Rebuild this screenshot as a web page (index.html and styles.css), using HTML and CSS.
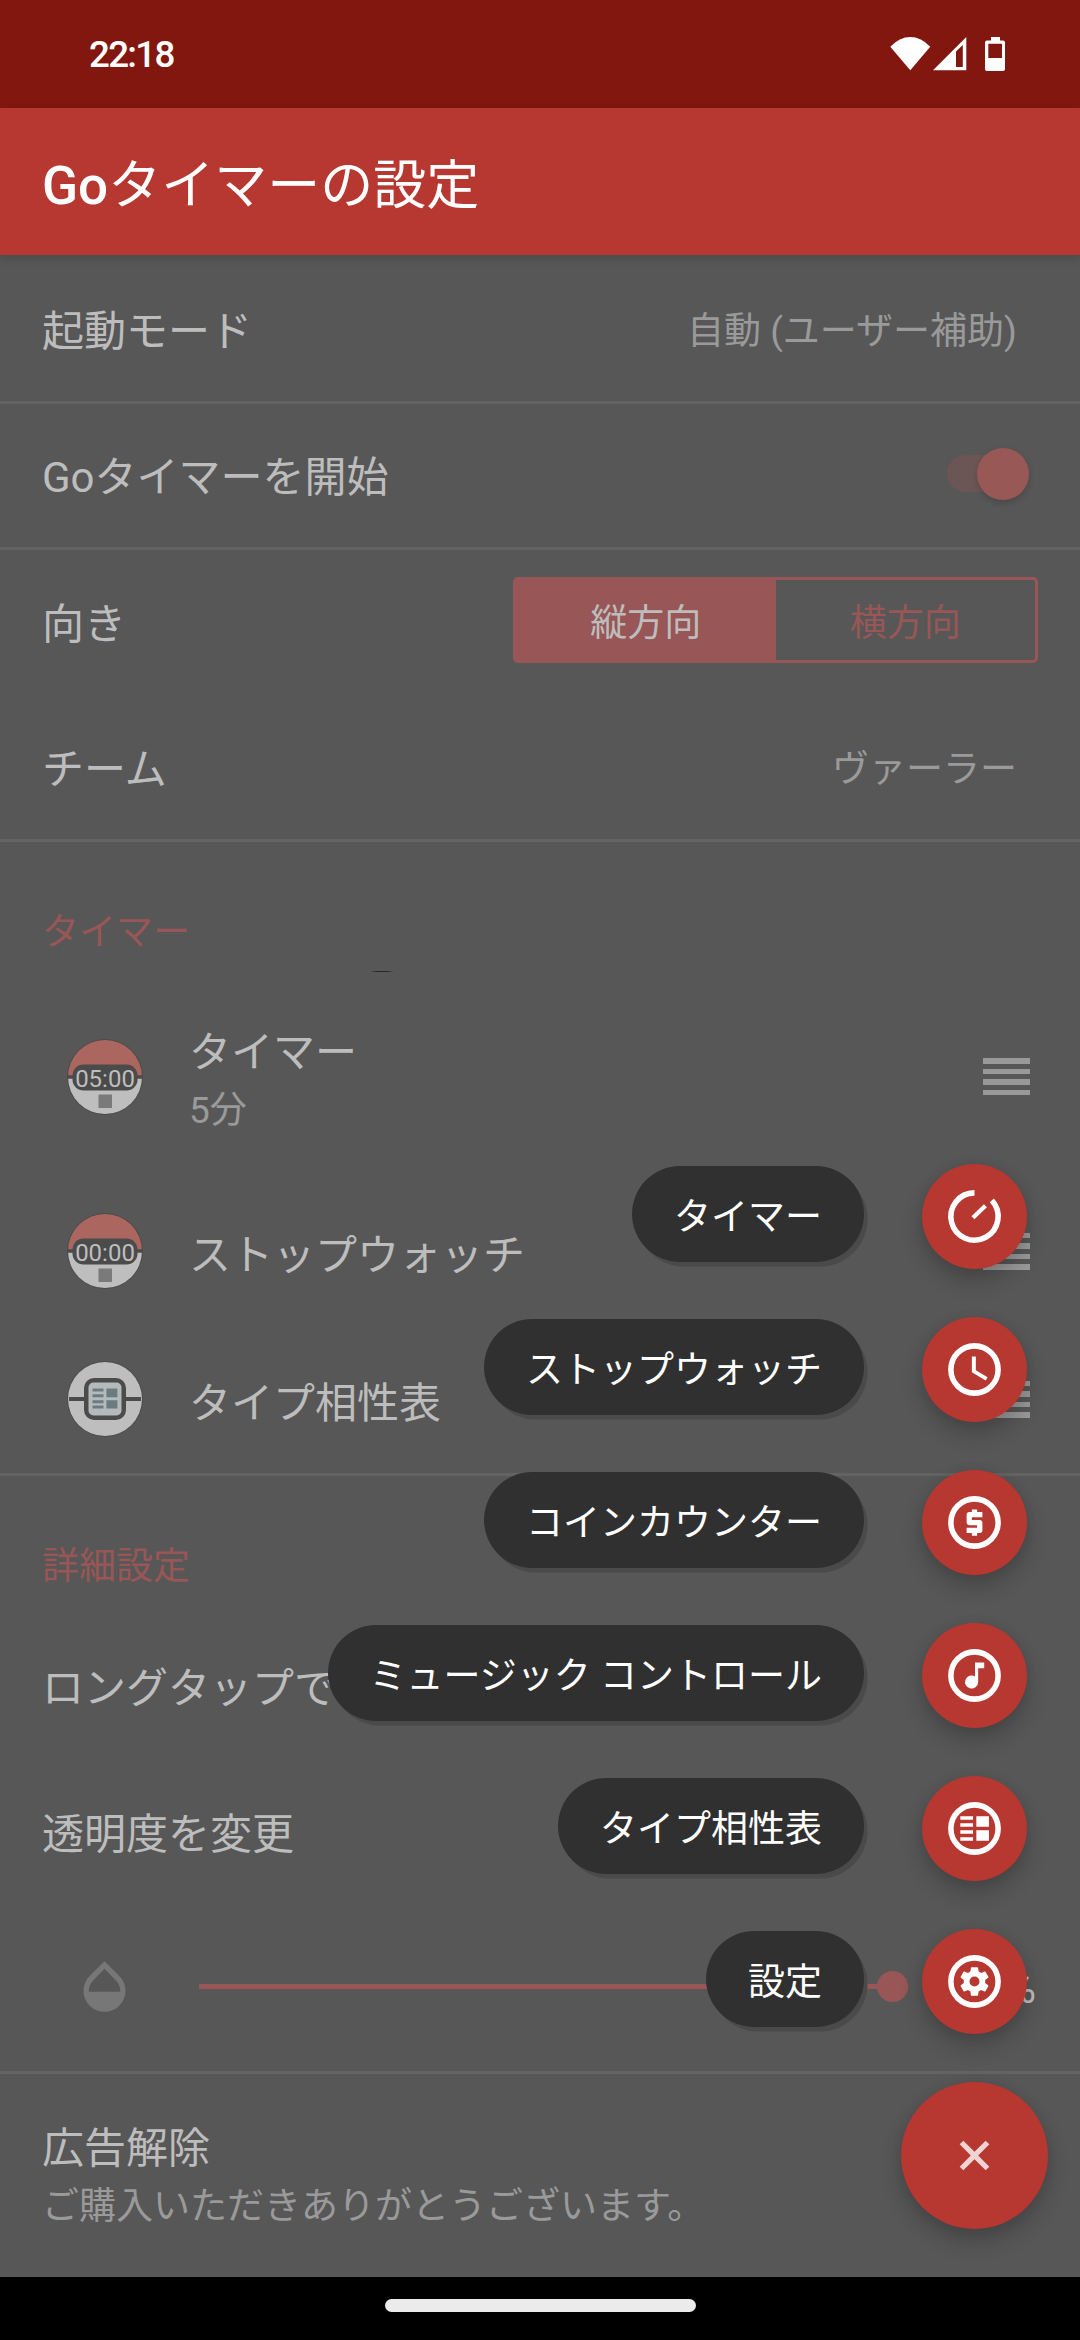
FILE: index.html
```html
<!DOCTYPE html>
<html lang="ja">
<head>
<meta charset="utf-8">
<title>Goタイマーの設定</title>
<link rel="stylesheet" href="styles.css">
</head>
<body>
<div class="screen">
  <header class="status-bar">
    <span class="clock">22:18</span>
    <svg class="status-icons" width="116" height="36" viewBox="890 36 116 36">
      <path class="white" d="M890.3 46.7Q899.500 37 910.300 37T930.200 46.700L910.300 70.300Z"/>
      <path class="white" fill-rule="evenodd" d="M933 70.300L966.300 37V70.300ZM956 51.500V67H962.800V45Z"/>
      <path class="white" fill-rule="evenodd" d="M991 37h9v3.500h3a2 2 0 0 1 2 2V69a2 2 0 0 1-2 2H987a2 2 0 0 1-2-2V42.500a2 2 0 0 1 2-2h4ZM988.300 43.800V58H1002V43.800Z"/>
    </svg>
  </header>
  <div class="app-bar"><h1 class="app-title"><span class="latin">Go</span>タイマーの設定</h1></div>

  <main class="settings">
    <div class="row first divided"><span>起動モード</span><span class="value">自動 (ユーザー補助)</span></div>
    <div class="row divided"><span>Goタイマーを開始</span><span class="switch"><span class="thumb"></span></span></div>
    <div class="row orientation"><span>向き</span>
      <div class="segmented"><span class="segment selected">縦方向</span><span class="segment">横方向</span></div>
    </div>
    <div class="row divided"><span>チーム</span><span class="value">ヴァーラー</span></div>

    <section class="timers">
      <h2 class="section-title">タイマー</h2>
      <span class="clipped-edge"></span>
      <div class="item item-timer">
        <svg class="ball" width="76" height="76" viewBox="-38 -38 76 76">
          <circle class="ball-rim" r="38"/><path class="ball-top" d="M-37 0a37 37 0 0 1 74 0Z"/><path class="ball-light" d="M-37 0a37 37 0 0 0 74 0Z"/>
          <path class="ball-dark" d="M-37-1.800H37V1.800H-37Z"/><rect class="ball-dark" x="-32.500" y="-12.500" width="65" height="26" rx="11"/>
          <rect class="ball-button" x="-6.500" y="17.500" width="13.500" height="13.500"/>
          <text class="ball-text" x="0" y="9.500" text-anchor="middle">05:00</text>
        </svg>
        <div class="item-text"><span>タイマー</span><span class="sub">5分</span></div>
        <span class="handle"><i></i><i></i><i></i><i></i></span>
      </div>
      <div class="item item-stopwatch">
        <svg class="ball" width="76" height="76" viewBox="-38 -38 76 76">
          <circle class="ball-rim" r="38"/><path class="ball-top" d="M-37 0a37 37 0 0 1 74 0Z"/><path class="ball-light" d="M-37 0a37 37 0 0 0 74 0Z"/>
          <path class="ball-dark" d="M-37-1.800H37V1.800H-37Z"/><rect class="ball-dark" x="-32.500" y="-12.500" width="65" height="26" rx="11"/>
          <rect class="ball-button" x="-6.500" y="17.500" width="13.500" height="13.500"/>
          <text class="ball-text" x="0" y="9.500" text-anchor="middle">00:00</text>
        </svg>
        <div class="item-text"><span>ストップウォッチ</span></div>
        <span class="handle"><i></i><i></i><i></i><i></i></span>
      </div>
      <div class="item item-chart">
        <svg class="ball" width="76" height="76" viewBox="-38 -38 76 76">
          <circle class="ball-rim" r="38"/><circle class="ball-light" r="37"/>
          <path class="ball-dark" d="M-36-2H36V2H-36Z"/><rect class="ball-dark" x="-21" y="-21" width="42" height="42" rx="10"/>
          <rect class="ball-panel" x="-16.500" y="-16.500" width="33" height="33" rx="5"/>
          <path class="ball-glyph" d="M-12.500-10.500H-1.500v3H-12.500ZM-12.500-4.700H-1.500v3H-12.500ZM-12.500 1.200H-1.500v3H-12.500ZM-12.500 6.500H-1.500v3H-12.500ZM1.400-10.500h11v8.800h-11ZM1.400 1.200h11V9.500h-11Z"/>
        </svg>
        <div class="item-text"><span>タイプ相性表</span></div>
        <span class="handle"><i></i><i></i><i></i><i></i></span>
      </div>
    </section>

    <section class="advanced">
      <h2 class="section-title">詳細設定</h2>
      <div class="plain-row">ロングタップで</div>
      <div class="plain-row">透明度を変更</div>
      <div class="slider-row">
        <svg class="drop" width="63" height="63" viewBox="0 0 24 24"><path d="M17.660 8L12 2.350 6.340 8C4.780 9.560 4 11.640 4 13.640s.780 4.110 2.340 5.670 3.610 2.350 5.660 2.350 4.100-.790 5.660-2.350S20 15.640 20 13.640 19.220 9.560 17.660 8zM6 14c.010-2 .620-3.270 1.760-4.400L12 5.270l4.240 4.380C17.380 10.770 17.990 12 18 14H6z"/></svg>
        <span class="slider"><span class="slider-thumb"></span></span>
        <span class="percent">100%</span>
      </div>
    </section>

    <section class="ads"><span>広告解除</span><span class="sub">ご購入いただきありがとうございます。</span></section>
  </main>

  <nav class="nav-bar"><span class="home-handle"></span></nav>

  <div class="speed-dial">
    <div class="action"><span class="pill">タイマー</span><span class="fab"><svg viewBox="0 0 24 24"><path class="line" d="M12 3A9 9 0 1 0 18.600 5.880"/><path class="hand" d="M11.400 12.500L16.150 7.900"/></svg></span></div>
    <div class="action"><span class="pill">ストップウォッチ</span><span class="fab"><svg viewBox="0 0 24 24"><circle class="line" cx="12" cy="12" r="9"/><path class="white" d="M12.500 7H11v6l5.250 3.150.750-1.230-4.500-2.670z"/></svg></span></div>
    <div class="action"><span class="pill">コインカウンター</span><span class="fab"><svg viewBox="0 0 24 24"><circle class="line" cx="12" cy="12" r="9"/><path class="white" d="M11 17h2v-1h1c.550 0 1-.450 1-1v-3c0-.550-.450-1-1-1h-3v-1h4V8h-2V7h-2v1h-1c-.550 0-1 .450-1 1v3c0 .550.450 1 1 1h3v1H9v2h2v1z"/></svg></span></div>
    <div class="action"><span class="pill">ミュージック コントロール</span><span class="fab"><svg viewBox="0 0 24 24"><circle class="line" cx="12" cy="12" r="9"/><path class="white" d="M12.200 7h3.500v2.200h-2.300v5.300a2.500 2.500 0 1 1-1.200-2.150z"/></svg></span></div>
    <div class="action"><span class="pill">タイプ相性表</span><span class="fab"><svg viewBox="0 0 24 24"><circle class="line" cx="12" cy="12" r="9"/><path class="white" d="M6.600 7.350h4.850V8.700H6.600ZM6.600 10h4.850v1.330H6.600ZM6.600 12.700h4.850V14H6.600ZM6.600 15.300h4.850v1.350H6.600ZM12.700 7.350h4.800v3.980h-4.800ZM12.700 12.700h4.800v3.950h-4.800Z"/></svg></span></div>
    <div class="action"><span class="pill">設定</span><span class="fab"><svg viewBox="0 0 24 24"><circle class="line" cx="12" cy="12" r="9"/><path class="white" fill-rule="evenodd" transform="translate(5.460 5.460) scale(.545)" d="M19.430 12.980c.040-.320.070-.640.070-.980s-.030-.660-.070-.980l2.110-1.650c.190-.150.240-.420.120-.640l-2-3.460c-.120-.220-.390-.300-.610-.220l-2.490 1c-.520-.400-1.080-.730-1.690-.980l-.380-2.650C14.460 2.180 14.250 2 14 2h-4c-.250 0-.460.180-.490.420l-.380 2.650c-.610.250-1.170.590-1.690.980l-2.490-1c-.230-.090-.490 0-.610.220l-2 3.460c-.130.220-.070.490.120.640l2.110 1.650c-.040.320-.070.650-.070.980s.030.660.070.980l-2.110 1.650c-.190.150-.240.420-.120.640l2 3.460c.120.220.390.300.610.220l2.490-1c.520.400 1.080.730 1.690.980l.380 2.650c.030.240.240.420.490.420h4c.250 0 .460-.180.490-.420l.380-2.650c.610-.250 1.170-.590 1.690-.980l2.490 1c.230.090.490 0 .610-.220l2-3.460c.120-.220.070-.490-.120-.640l-2.110-1.650zM12 15.500a3.500 3.500 0 1 1 0-7 3.500 3.500 0 0 1 0 7z"/></svg></span></div>
    <span class="fab main-fab"><svg viewBox="0 0 24 24"><path class="close" d="M19 13h-6v6h-2v-6H5v-2h6V5h2v6h6z" transform="rotate(45 12 12)"/></svg></span>
  </div>
</div>
</body>
</html>
```
FILE: styles.css
```css
* { box-sizing: border-box; }

body {
  margin: 0;
  font-family: Roboto, "Noto Sans CJK JP", sans-serif;
  font-weight: 400;
}

.screen {
  position: relative;
  display: flex;
  flex-direction: column;
  width: 1080px;
  height: 2340px;
  overflow: hidden;
  background: #575757;
  color: #bdbdbd;
  font-size: 42px;
  line-height: 60px;
  white-space: nowrap;
}

.white { fill: #fff; }

/* Status bar and title */
.status-bar {
  display: flex;
  align-items: center;
  justify-content: space-between;
  height: 108px;
  padding: 0 74px 0 89px;
  background: #821710;
}
.clock { padding-top: 2px; color: #fff; font-size: 36.75px; font-weight: 500; letter-spacing: -1.7px; }

.app-bar {
  z-index: 1;
  display: flex;
  align-items: center;
  height: 147px;
  padding: 9px 42px 0;
  background: #b73731;
  box-shadow: 0 2px 10px rgba(0, 0, 0, .18);
}
.app-title { margin: 0; color: #fff; font-size: 53px; font-weight: 400; line-height: 76px; }
.latin { font-weight: 500; }

/* Settings list */
.settings { flex: 1; display: flex; flex-direction: column; }
.row {
  display: flex;
  align-items: center;
  justify-content: space-between;
  height: 146px;
  padding: 5px 63px 0 42px;
}
.row.first { height: 149px; padding-top: 8px; }
.divided { border-bottom: 3px solid #636363; }
.row.orientation { padding-top: 3px; padding-right: 42px; }
.value, .sub { color: #9a9a9a; font-size: 37px; }

.switch {
  display: flex;
  align-items: center;
  justify-content: flex-end;
  width: 78px;
  height: 37px;
  margin: 0 -8px 9px 0;
  border-radius: 19px;
  background: #6b5655;
}
.thumb {
  flex: none;
  width: 52px;
  height: 52px;
  margin-right: -4px;
  border-radius: 50%;
  background: #985856;
  box-shadow: 0 3px 6px rgba(0, 0, 0, .16);
}

.segmented {
  display: flex;
  width: 525px;
  height: 86px;
  margin-bottom: 9px;
  border: 3px solid #985656;
  border-radius: 5px;
}
.segment {
  flex: 1;
  display: flex;
  align-items: center;
  justify-content: center;
  padding-top: 8px;
  color: #985656;
  font-size: 37px;
}
.segment.selected { background: #985656; color: #bdbdbd; }

.section-title {
  margin: 0;
  padding-left: 42px;
  color: #985656;
  font-size: 37px;
  font-weight: 400;
  line-height: 54px;
}

.timers {
  display: flex;
  flex-direction: column;
  height: 634px;
  padding-top: 64px;
  border-bottom: 3px solid #636363;
}
.clipped-edge {
  width: 24px;
  height: 1px;
  margin: 11px 0 0 370px;
  background: linear-gradient(90deg, #575757, #262626 30%, #262626 70%, #575757);
}
.item { display: flex; align-items: center; padding: 0 50px 0 67px; }
.item-timer { height: 172px; margin-top: 19px; }
.item-stopwatch { height: 148px; margin-top: 15px; }
.item-chart { height: 148px; }
.item-text { flex: 1; display: flex; flex-direction: column; margin-left: 46px; padding-top: 9px; }
.item-text .sub { line-height: 56px; }

.ball-rim, .ball-dark { fill: #4b4b4b; }
.ball-top { fill: #ab675f; }
.ball-light { fill: #bebebe; }
.ball-button { fill: #7a7a7a; }
.ball-panel { fill: #b4b9bb; }
.ball-glyph { fill: #6d7b81; }
.ball-text { fill: #bebebe; font-size: 24px; }

.handle { display: flex; flex-direction: column; gap: 5px; width: 47px; }
.handle i { height: 5.5px; background: #999; }

.advanced {
  display: flex;
  flex-direction: column;
  height: 598px;
  padding-top: 64px;
  border-bottom: 3px solid #636363;
}
.plain-row { padding-left: 42px; line-height: 146px; }
.advanced .section-title + .plain-row { margin-top: 22px; }
.slider-row { display: flex; align-items: center; height: 156px; padding: 0 44px 0 73px; }
.drop { fill: #777; }
.slider {
  display: flex;
  align-items: center;
  justify-content: flex-end;
  width: 709px;
  height: 5px;
  margin-left: 63px;
  background: #985656;
}
.slider-thumb { flex: none; width: 31px; height: 31px; border-radius: 50%; background: #985656; }
.percent { flex: 1; padding-top: 5px; text-align: right; }

.ads { display: flex; flex-direction: column; padding: 45px 42px 0; }
.ads .sub { line-height: 56px; }

.nav-bar {
  display: flex;
  justify-content: center;
  height: 63px;
  padding-top: 22px;
  background: #000;
}
.home-handle { width: 311px; height: 13px; border-radius: 7px; background: #ebebeb; }

/* Floating menu laid over the settings */
.speed-dial {
  position: absolute;
  z-index: 2;
  right: 32px;
  bottom: 111px;
  display: flex;
  flex-direction: column;
  align-items: flex-end;
  gap: 48px;
}
.action { display: flex; align-items: center; gap: 58px; padding-right: 21px; }
.pill {
  height: 96px;
  margin-bottom: 5px;
  padding: 0 42px;
  border-radius: 48px;
  background: #303030;
  box-shadow: 4px 5px 0 -.5px #4a4a4a;
  color: #fff;
  font-size: 37px;
  line-height: 103px;
}
.fab {
  display: flex;
  align-items: center;
  justify-content: center;
  width: 105px;
  height: 105px;
  border-radius: 50%;
  background: #b73731;
  box-shadow: 0 12px 22px rgba(0, 0, 0, .2), 0 0 12px rgba(0, 0, 0, .06);
}
.fab svg { width: 63px; height: 63px; }
.main-fab { width: 147px; height: 147px; }
.line { fill: none; stroke: #fff; stroke-width: 2.1; }
.hand { stroke: #fff; stroke-width: 1.600; }
.close { fill: #efd4d3; }
```
